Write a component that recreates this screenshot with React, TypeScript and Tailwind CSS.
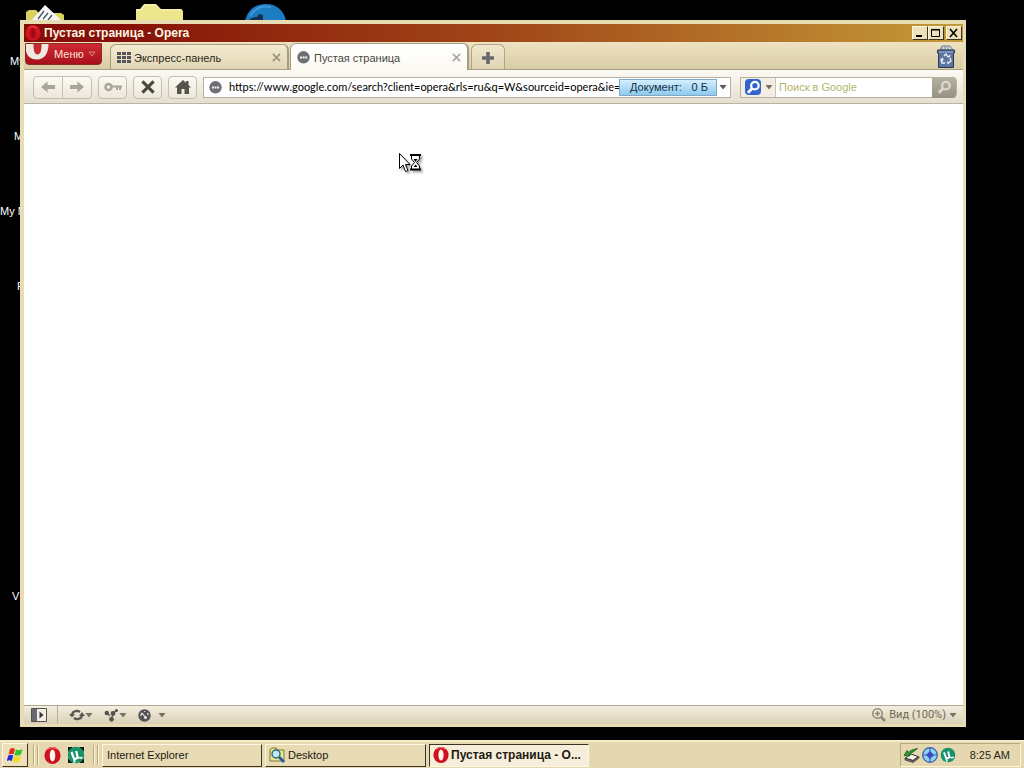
import type { ReactNode } from "react";

interface DesktopLabel {
  text: string;
  place: string;
}

const desktopLabels: DesktopLabel[] = [
  { text: "My", place: "left-[10px] top-[54px]" },
  { text: "My", place: "left-[14px] top-[129px]" },
  { text: "My N", place: "left-0 top-[204px]" },
  { text: "R", place: "left-[17px] top-[279px]" },
  { text: "V", place: "left-[12px] top-[589px]" },
];

const raised = "border border-t-[#fff8e0] border-l-[#fff8e0] border-r-[#3a3420] border-b-[#3a3420]";

const OperaIcon = ({ className }: { className: string }) => (
  <svg viewBox="0 0 16 16" className={className} aria-hidden="true">
    <ellipse cx="8" cy="8" rx="7.6" ry="8" fill="#cf1020" />
    <path d="M3 2.5a7.5 7.5 0 0 1 10 0" stroke="#ee6a6a" strokeWidth="1" fill="none" />
    <ellipse cx="8" cy="8" rx="2.6" ry="5.6" fill="#fff4ea" />
  </svg>
);

// the title bar one sits on dark red, so its hole is dark too
const OperaTitleIcon = () => (
  <svg viewBox="0 0 16 16" className="size-4" aria-hidden="true">
    <ellipse cx="8" cy="8" rx="7.6" ry="7.8" fill="#d01420" />
    <path d="M3 3a7 7 0 0 1 9 0" stroke="#f0505a" fill="none" />
    <ellipse cx="8" cy="8.5" rx="2.6" ry="5" fill="#a30c14" />
  </svg>
);

const UTorrentIcon = ({ square }: { square?: boolean }) => (
  <svg viewBox="0 0 18 18" className={square ? "size-[18px]" : "size-4"} aria-hidden="true">
    {square && <path d="M1 1h5L1 6zM12 1h5v5zM1 12v5h5zM17 12v5h-5z" fill="#0c1f18" />}
    <circle cx="9" cy="9" r="8.2" fill="#17926a" />
    <path d="M4.500 6l2 5.500c.8 2 4 1.500 4-.8L9.200 5" stroke="#fff" strokeWidth="2.200" fill="none" />
    <path d="M10.500 10.500c.5 1.500 2.500 1.800 5 1" stroke="#fff" strokeWidth="1.600" fill="none" />
    <path d="M6.800 11.500l1 5" stroke="#fff" strokeWidth="1.800" />
  </svg>
);

const Caret = ({ color = "#77705f" }: { color?: string }) => (
  <svg viewBox="0 0 8 5" className="h-[5px] w-2 shrink-0" aria-hidden="true">
    <path d="M.5 0h7L4 4.500z" fill={color} />
  </svg>
);

const BubbleIcon = () => (
  <svg viewBox="0 0 13 13" className="size-[13px] shrink-0" aria-hidden="true">
    <circle cx="6.5" cy="6.3" r="6.2" fill="#6c7075" />
    <path d="M3 5.5h2v2H3zM5.6 5.5h2v2h-2zM8.2 5.5h2v2h-2z" fill="#f4f2ea" />
  </svg>
);

const Cross = ({ className, color, width }: { className: string; color: string; width: number }) => (
  <svg viewBox="0 0 10 10" className={className} aria-hidden="true">
    <path d="M1 1l8 8M9 1L1 9" stroke={color} strokeWidth={width} />
  </svg>
);

const ArrowIcon = ({ flip }: { flip?: boolean }) => (
  <svg viewBox="0 0 16 12" className={flip ? "h-3 w-4 rotate-180" : "h-3 w-4"} aria-hidden="true">
    <path d="M1 6l6.500-5.500v3.500H15v4H7.500v3.500z" fill="#aaa598" />
  </svg>
);

const SearchGlyph = ({ className }: { className: string }) => (
  <svg viewBox="0 0 16 16" className={className} fill="none" stroke="currentColor" aria-hidden="true">
    <circle cx="9.500" cy="6" r="4" strokeWidth="2.400" />
    <path d="M6.500 9L2 13.500" strokeWidth="3" />
  </svg>
);

const WindowButton = ({ label, children }: { label: string; children: ReactNode }) => (
  <button type="button" aria-label={label} className={`flex h-[14px] w-4 items-center justify-center bg-[#eee0b8] ${raised}`}>
    <svg viewBox="0 0 12 10" className="h-[10px] w-3" fill="none" stroke="#000">
      {children}
    </svg>
  </button>
);

const ToolButton = ({ label, children }: { label: string; children: ReactNode }) => (
  <button type="button" aria-label={label} className="flex h-[23px] w-[29px] items-center justify-center rounded border border-[#c4bfae] bg-linear-to-b from-[#fbf9f2] to-[#ece7da]">
    {children}
  </button>
);

const TitleBar = () => (
  <header className="flex h-[18px] items-center justify-between bg-linear-to-r from-[#860d08] from-10% via-[#a04518] via-50% to-[#c39a38] pr-[1px] pl-[1px]">
    <div className="flex items-center gap-[3px]">
      <OperaTitleIcon />
      <h1 className="text-xs leading-4 font-bold whitespace-nowrap text-[#fff6e4]">Пустая страница - Opera</h1>
    </div>
    <div className="flex">
      <WindowButton label="Свернуть">
        <path d="M2 8h6" strokeWidth="2" />
      </WindowButton>
      <WindowButton label="Развернуть">
        <path d="M1.500 1.500h8v7h-8zM1 2h9" />
      </WindowButton>
      <span className="w-[2px]" />
      <WindowButton label="Закрыть">
        <path d="M2 1l7 8M9 1L2 9" strokeWidth="1.500" />
      </WindowButton>
    </div>
  </header>
);

const TabBar = () => (
  <div className="flex h-7 items-end border-b border-[#a89f82] bg-linear-to-b from-[#eee2c2] to-[#d9cda6] pr-2">
    <button type="button" className="mt-[1px] ml-[1px] flex h-[22px] w-[77px] items-center self-start overflow-hidden rounded-b border border-[#8c2a24] bg-linear-to-b from-[#cf2a34] to-[#a80f1c] text-[11px] leading-4 text-[#ffe4d8]">
      <svg viewBox="0 0 28 20" className="h-5 w-7 shrink-0" aria-hidden="true">
        <path d="M0 0h22.500c0 9-4 15.500-11.500 15.500C5 15.500 1 12 0 7z" fill="#efe9e0" />
        <path d="M7.500 0h8c0 7-1 10.500-4 10.500S7.500 7 7.500 0z" fill="#c42a34" />
      </svg>
      Меню
      <svg viewBox="0 0 8 6" className="ml-1 h-[6px] w-2" aria-hidden="true">
        <path d="M1 1h6L4 5z" stroke="#d98a70" fill="none" />
      </svg>
    </button>
    <div className="ml-2 flex h-[25px] w-[179px] items-center rounded-t-md border border-r-2 border-b-0 border-[#a69d80] bg-linear-to-b from-[#f3ead0] to-[#e1d6b4] px-[6px] pt-[1px]">
      <button type="button" className="flex flex-1 items-center gap-[3px] text-[11px] leading-4 text-[#292620]">
        <svg viewBox="0 0 14 12" className="h-3 w-[14px]" fill="#53575c" aria-hidden="true">
          <path d="M0 0h4v3H0zM5 0h4v3H5zM10 0h4v3h-4zM0 4h4v3H0zM5 4h4v3H5zM10 4h4v3h-4zM0 8h4v3H0zM5 8h4v3H5zM10 8h4v3h-4z" />
        </svg>
        Экспресс-панель
      </button>
      <button type="button" aria-label="Закрыть вкладку">
        <Cross className="size-[9px]" color="#9b937c" width={1.8} />
      </button>
    </div>
    <div className="-mb-px ml-[1px] flex h-[27px] w-[179px] items-center rounded-t-md border border-r-2 border-b-0 border-[#a69d80] bg-linear-to-b from-white to-[#fcfaf4] px-[6px] pt-[1px]">
      <button type="button" className="flex flex-1 items-center gap-1 text-[11px] leading-4 text-[#4a4740]">
        <BubbleIcon />
        Пустая страница
      </button>
      <button type="button" aria-label="Закрыть вкладку">
        <Cross className="size-[9px]" color="#aaa6a0" width={1.8} />
      </button>
    </div>
    <button type="button" aria-label="Новая вкладка" className="ml-[2px] flex h-[25px] w-[34px] items-center justify-center rounded-t-md border border-b-0 border-[#b0a688] bg-linear-to-b from-[#f1e8cd] to-[#dfd4b2] pt-[1px]">
      <svg viewBox="0 0 12 12" className="size-3" aria-hidden="true">
        <path d="M6 0v12M0 6h12" stroke="#666a6e" strokeWidth="3.600" />
      </svg>
    </button>
    <button type="button" aria-label="Закрытые вкладки" className="ml-auto">
      <svg viewBox="0 0 18 24" className="h-6 w-[18px]" aria-hidden="true">
        <path d="M3 5l2-4h8l3 4z" fill="#d6dfdf" stroke="#6b7c86" />
        <path d="M5 2v3M8 1v3M11 2v3" stroke="#71848a" />
        <path d="M.5 5h17v3h-1v14.500h-15V8h-1z" fill="#5d74a0" stroke="#2d3850" />
        <path d="M2 7h14" stroke="#9db0cf" />
        <path d="M7 11l2-2 2 3M13 13l1 3-3 2M8 18H5l-1-3 2-2M10 11l2 1 1-2M10 17l2 2M5 13l1 3" stroke="#f0f4fa" strokeWidth="1.300" fill="none" />
      </svg>
    </button>
  </div>
);

const Toolbar = () => (
  <div className="flex h-[34px] items-center gap-[6px] border-b border-[#b9b3a2] bg-linear-to-b from-[#fcfaf4] to-[#e5dfd0] pt-[1px] pr-[6px] pl-[9px]">
    <div className="flex h-[23px] w-[59px] divide-x divide-[#c4bfae] rounded border border-[#c4bfae] bg-linear-to-b from-[#fbf9f2] to-[#ece7da]">
      <button type="button" aria-label="Назад" className="flex flex-1 items-center justify-center">
        <ArrowIcon />
      </button>
      <button type="button" aria-label="Вперед" className="flex flex-1 items-center justify-center">
        <ArrowIcon flip />
      </button>
    </div>
    <ToolButton label="Пароли">
      <svg viewBox="0 0 18 10" className="h-[10px] w-[18px]" fill="none" stroke="#aaa598" aria-hidden="true">
        <ellipse cx="4.500" cy="5" rx="3" ry="3" strokeWidth="2.600" />
        <path d="M8 4.500h10M13 5v3M16 5v3" strokeWidth="2" />
      </svg>
    </ToolButton>
    <ToolButton label="Остановить">
      <Cross className="size-[14px]" color="#4b473e" width={2.2} />
    </ToolButton>
    <ToolButton label="Домой">
      <svg viewBox="0 0 16 14" className="h-[14px] w-4" fill="#57524a" aria-hidden="true">
        <path d="M8 0l3 2.700V1h2.500v4L16 7.500h-2V14H9.500V9h-3v5H2V7.500H0z" />
      </svg>
    </ToolButton>
    <div className="flex h-[21px] min-w-0 flex-1 items-center border border-[#b5b0a2] bg-white pr-[3px] pl-[5px]">
      <BubbleIcon />
      <input
        type="text"
        aria-label="Адрес"
        defaultValue="https://www.google.com/search?client=opera&rls=ru&q=W&sourceid=opera&ie=utf-8&oe=utf-8"
        className="ml-[7px] min-w-0 flex-1 bg-transparent font-[Lato,sans-serif] text-[11px] leading-4 text-black outline-none"
      />
      <div className="flex h-[17px] w-[98px] shrink-0 items-center justify-between border border-[#80a8c4] bg-linear-to-b from-[#d4effd] to-[#8bcaf0] pr-2 pl-[10px] text-[11px] leading-4 text-[#15303f]">
        <span>Документ:</span>
        <span>0 Б</span>
      </div>
      <button type="button" aria-label="История адресов" className="ml-[2px]">
        <Caret color="#5c5950" />
      </button>
    </div>
    <form className="ml-[3px] flex h-[21px] w-[217px] shrink-0 items-center rounded-r border border-[#b5b0a2] bg-white">
      <button type="button" aria-label="Поисковая система" className="flex h-full w-[35px] items-center gap-1 border-r border-[#c9c4b4] bg-[#f2eee2] pl-1">
        <span className="flex size-4 items-center justify-center rounded-sm bg-[#3462cf] text-white">
          <SearchGlyph className="size-[15px]" />
        </span>
        <Caret />
      </button>
      <input type="search" aria-label="Поиск" placeholder="Поиск в Google" className="ml-[3px] min-w-0 flex-1 text-[11px] leading-4 outline-none placeholder:text-[#b4b568]" />
      <button type="button" aria-label="Найти" className="-my-px flex h-[21px] w-6 items-center justify-center rounded-r bg-linear-to-b from-[#b6b2a3] to-[#969181] text-[#dbd7ca]">
        <SearchGlyph className="size-[15px]" />
      </button>
    </form>
  </div>
);

const StatusBar = () => (
  <footer className="flex h-[19px] items-center border-t border-[#b0a98f] bg-linear-to-b from-[#f3eee0] to-[#d9d0b5] pr-[6px] pl-[7px]">
    <button type="button" aria-label="Панели">
      <svg viewBox="0 0 16 14" className="h-[14px] w-4" aria-hidden="true">
        <path d="M.5.5h15v13H.5z" fill="#f3efe5" stroke="#56534c" />
        <path d="M1 1h5v12H1z" fill="#6a6b72" />
        <path d="M8.500 3.500v7l4-3.500z" fill="#38352f" />
      </svg>
    </button>
    <span className="mr-[11px] ml-[10px] h-[18px] w-px bg-[#b8b097]" />
    <button type="button" aria-label="Синхронизация" className="flex items-center">
      <svg viewBox="0 0 16 14" className="h-[14px] w-4" aria-hidden="true">
        <path d="M3 6a5 4.500 0 0 1 8-2M13 8a5 4.500 0 0 1-8 2" stroke="#5c5950" strokeWidth="2.400" fill="none" />
        <path d="M0 6h6L3 9.500zM10 8h6l-3-4z" fill="#5c5950" />
      </svg>
      <Caret />
    </button>
    <button type="button" aria-label="Opera Unite" className="ml-[11px] flex items-center">
      <svg viewBox="0 0 15 14" className="h-[14px] w-[15px]" fill="#57544c" aria-hidden="true">
        <circle cx="2.800" cy="5" r="2.200" />
        <circle cx="9" cy="5.500" r="2.400" />
        <circle cx="7.500" cy="11.300" r="2.400" />
        <circle cx="12.500" cy="2.500" r="1.500" />
        <path d="M9 5.500l3.500-3M9 6l-1.500 5M3 5l3 3" stroke="#57544c" strokeWidth="1.200" fill="none" />
      </svg>
      <Caret />
    </button>
    <button type="button" aria-label="Opera Turbo" className="ml-[11px] flex items-center gap-[7px]">
      <svg viewBox="0 0 13 13" className="size-[13px]" aria-hidden="true">
        <circle cx="6.500" cy="6.500" r="6.200" fill="#54555a" />
        <path d="M3 7a3.600 3.600 0 0 1 1-3M6 2.500h1M9.500 4l.8 2M4 4l3.500 4.500" stroke="#e8e4da" strokeWidth="1.200" fill="none" />
        <circle cx="7.500" cy="8.500" r="1.500" fill="#e8e4da" />
      </svg>
      <Caret />
    </button>
    <button type="button" className="ml-auto flex items-center gap-[3px] text-[11px] leading-4 text-[#6e6857]">
      <svg viewBox="0 0 14 14" className="size-[14px]" fill="none" stroke="#8e8875" aria-hidden="true">
        <circle cx="5.500" cy="5.500" r="4.700" strokeWidth="1.500" />
        <path d="M3 5.500h5M5.500 3v5" strokeWidth="1.500" />
        <path d="M9 9l4 4" strokeWidth="2.500" />
      </svg>
      <span className="font-[Roboto,sans-serif]">Вид (100%)</span>
      <Caret />
    </button>
  </footer>
);

const DesktopIcons = () => (
  <div>
    <svg viewBox="0 0 40 16" className="absolute top-[5px] left-[26px] h-4 w-10" aria-hidden="true">
      <path d="M0 16V7l3-2h7l3 3h22l3 2v6z" fill="#d9d25e" />
      <path d="M5 16L19 0l17 16z" fill="#f6f8fa" />
      <path d="M12 14l6-8M17 14l5-6M22 15l4-5" stroke="#45525c" strokeWidth="1.300" />
    </svg>
    <svg viewBox="0 0 47 18" className="absolute top-[3px] left-[136px] h-[18px] w-[47px]" aria-hidden="true">
      <path d="M0 18V6h4l4-5h12l5 5h20l2 2v10z" fill="#ede58a" />
      <path d="M1 7h4l4-5h11l5 5h21" stroke="#fbf8c4" fill="none" />
    </svg>
    <svg viewBox="0 0 42 18" className="absolute top-[3px] left-[245px] h-[18px] w-[42px]" aria-hidden="true">
      <path d="M0 18C3 6 11 1 21 1s18 6 20 17z" fill="#1b7cc2" />
      <path d="M5 13c5-8 12-11 21-9" stroke="#3f9bd6" strokeWidth="2" fill="none" />
      <path d="M3 18c3-3 6-4 9-4l2-3 4 1v6z" fill="#12304e" />
    </svg>
    {desktopLabels.map((l) => (
      <span key={l.place} className={`absolute text-[11px] leading-[14px] whitespace-nowrap text-white ${l.place}`}>{l.text}</span>
    ))}
  </div>
);

const BusyCursor = () => (
  <svg viewBox="0 0 24 22" className="absolute top-[48px] left-[374px] h-[22px] w-6 drop-shadow-[2px_2px_1px_rgba(0,0,0,0.35)]" aria-hidden="true">
    <path d="M1.500 1.500v15l3.500-3.500 2.500 6.500 2.500-1-2.500-6H12z" fill="#fff" stroke="#000" />
    <path d="M13.500 3.500v3.500l3 3.500-3 3.500v3.500h8V14l-3-3.500 3-3.500V3.500z" fill="#fff" stroke="#000" />
    <path d="M12 2h11v2H12zM12 16.500h11v2H12z" fill="#000" />
    <path d="M15.500 7h4l-2 3zM17.500 12.500l2 2.500h-4z" fill="#000" />
  </svg>
);

const TaskSeparator = () => (
  <span className="flex gap-[2px]">
    <span className="h-5 w-[2px] border-l border-[#b5a980] bg-[#fff5d8]" />
    <span className="h-5 w-[2px] border-l border-[#b5a980] bg-[#fff5d8]" />
  </span>
);

const Taskbar = () => (
  <nav className="flex h-7 items-center border-t-2 border-[#f6ebc9] bg-[#e5d8b0] pr-[3px] pl-[2px]">
    <button type="button" aria-label="Start" className={`flex h-6 w-[26px] items-center justify-center bg-[#ecdfb9] ${raised}`}>
      <svg viewBox="0 0 17 16" className="h-4 w-[17px]" aria-hidden="true">
        <path d="M3 2c2-1.500 3.500-1 5 0L6.500 7.500c-1.500-1-3-1.300-5 0z" fill="#e0301e" />
        <path d="M9 2.500c2 1 4 1 6.500-.5L14 7.500c-2 1.300-4.500 1.300-6.500.5z" fill="#2fc42f" />
        <path d="M1.200 8.700c2-1.300 3.500-1 5 0l-1.500 5.500c-1.500-1-3-1.300-5 0z" fill="#1f2ce0" />
        <path d="M7.300 9c2 1 4 1 6.500-.3l-1.500 5.500c-2 1.300-4.500 1.300-6.500.3z" fill="#f0dc20" />
      </svg>
    </button>
    <span className="ml-[5px]">
      <TaskSeparator />
    </span>
    <button type="button" aria-label="Opera" className="ml-[5px]">
      <OperaIcon className="size-[17px]" />
    </button>
    <button type="button" aria-label="uTorrent" className="mr-2 ml-[6px]">
      <UTorrentIcon square />
    </button>
    <TaskSeparator />
    <div className="ml-[3px] flex flex-1 gap-[3px] text-[11px] leading-4 text-[#1d1a10]">
      <button type="button" className={`flex h-[23px] w-40 items-center bg-[#e8dbb4] pl-1 ${raised}`}>Internet Explorer</button>
      <button type="button" className={`flex h-[23px] w-[161px] items-center gap-[3px] bg-[#e8dbb4] pl-[3px] ${raised}`}>
        <svg viewBox="0 0 16 16" className="size-4" aria-hidden="true">
          <path d="M1 3l2-2h4l2 2h6v11H1z" fill="#eee58a" stroke="#807837" />
          <circle cx="7" cy="7" r="4" fill="#bfe9f5" stroke="#256b7c" strokeWidth="1.400" />
          <path d="M10 10l5 5" stroke="#2054a2" strokeWidth="2.600" />
        </svg>
        Desktop
      </button>
      <button type="button" className="flex h-[23px] w-40 items-center gap-[2px] border border-t-[#3a3420] border-r-[#fff8e0] border-b-[#fff8e0] border-l-[#3a3420] bg-[#f6eedb] pl-[3px] text-xs leading-4 font-bold whitespace-nowrap">
        <OperaIcon className="size-4" />
        Пустая страница - О...
      </button>
    </div>
    <div className="flex h-6 w-[121px] items-center border border-t-[#b5a980] border-r-[#fff5d8] border-b-[#fff5d8] border-l-[#b5a980] pr-[10px] pl-[2px]">
      <svg viewBox="0 0 17 16" className="h-4 w-[17px]" aria-hidden="true">
        <path d="M8 7l7 2.500-5 4L2 11z" fill="#f3f3ec" stroke="#34342f" />
        <path d="M2 11v2l8 2.500 6-4.500V9.500l-6 4z" fill="#6c6c62" stroke="#34342f" strokeWidth=".7" />
        <path d="M14.500 1.500L9 3 5 5.500 4 3.500 1 8.500l6 .5-1-1.700 4-2.300z" fill="#2ea22e" stroke="#145a1b" strokeWidth=".8" />
      </svg>
      <svg viewBox="0 0 16 16" className="ml-[2px] size-4" aria-hidden="true">
        <circle cx="8" cy="8" r="7.300" fill="#8fd4ee" stroke="#3a5fae" strokeWidth="1.300" />
        <path d="M8 1v14M1 8h14" stroke="#3a5fc0" strokeWidth="1.200" />
        <path d="M8 4l4 4-4 4-4-4z" fill="#3b46c4" />
      </svg>
      <span className="ml-[2px]">
        <UTorrentIcon />
      </span>
      <time className="ml-auto text-[11px] leading-4 whitespace-nowrap text-[#28241a]">8:25 AM</time>
    </div>
  </nav>
);

const App: React.FC = () => {
  return (
    <div className="flex min-h-screen flex-col bg-black font-['Liberation_Sans',Arial,sans-serif]">
      <div className="relative flex flex-1 flex-col pt-5 pr-[58px] pb-[13px] pl-5">
        <DesktopIcons />
        <section className="relative flex flex-1 flex-col border-4 border-r-[3px] border-b-[3px] border-[#e8dcb4] bg-white">
          <TitleBar />
          <TabBar />
          <Toolbar />
          <main className="relative flex-1 bg-white">
            <BusyCursor />
          </main>
          <StatusBar />
        </section>
      </div>
      <Taskbar />
    </div>
  );
};

export default App;
